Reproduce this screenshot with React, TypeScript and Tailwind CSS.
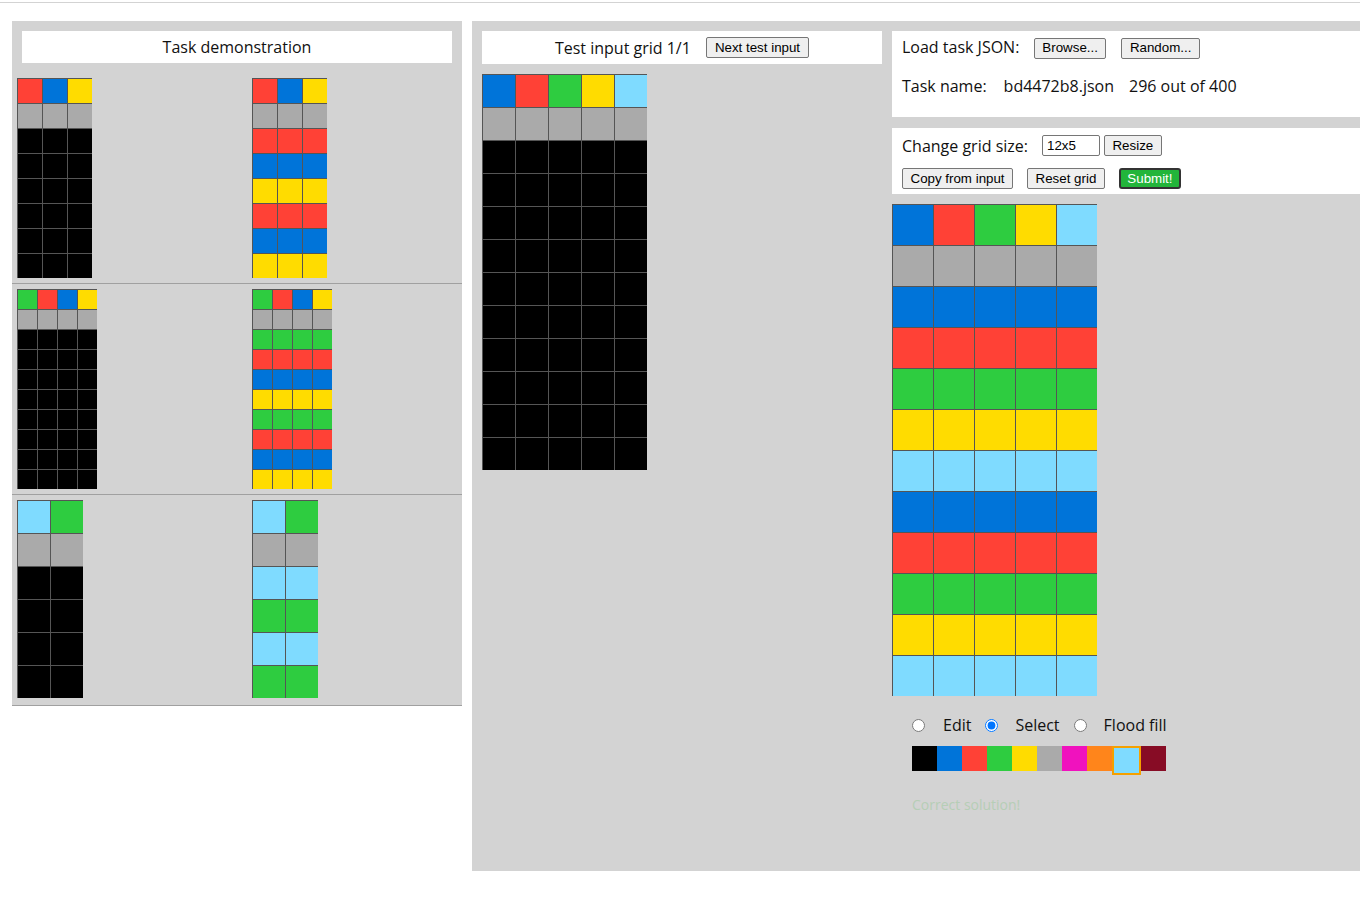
import { useState } from "react";

const COLORS = [
  "#000000",
  "#0074D9",
  "#FF4136",
  "#2ECC40",
  "#FFDC00",
  "#AAAAAA",
  "#F012BE",
  "#FF851B",
  "#7FDBFF",
  "#870C25",
];

// build a grid from a header row, a gray row and a list of fill colours
const makeGrid = (top: number[], body: number[]) => [
  top,
  top.map(() => 5),
  ...body.map((c) => top.map(() => c)),
];

const pairs = [
  {
    input: makeGrid([2, 1, 4], [0, 0, 0, 0, 0, 0]),
    output: makeGrid([2, 1, 4], [2, 1, 4, 2, 1, 4]),
    size: 25,
  },
  {
    input: makeGrid([3, 2, 1, 4], [0, 0, 0, 0, 0, 0, 0, 0]),
    output: makeGrid([3, 2, 1, 4], [3, 2, 1, 4, 3, 2, 1, 4]),
    size: 20,
  },
  {
    input: makeGrid([8, 3], [0, 0, 0, 0]),
    output: makeGrid([8, 3], [8, 3, 8, 3]),
    size: 33,
  },
];

const testInput = makeGrid([1, 2, 3, 4, 8], [0, 0, 0, 0, 0, 0, 0, 0, 0, 0]);
const testOutput = makeGrid([1, 2, 3, 4, 8], [1, 2, 3, 4, 8, 1, 2, 3, 4, 8]);

const Grid = ({ rows, size }: { rows: number[][]; size: number }) => (
  <div className="flex flex-col">
    {rows.map((row, r) => (
      <div className="flex" key={r}>
        {row.map((c, i) => (
          <span
            key={i}
            className="box-border border-t border-l border-[#555555]"
            style={{ width: size, height: size, backgroundColor: COLORS[c] }}
          />
        ))}
      </div>
    ))}
  </div>
);

const Btn = ({
  children,
  className = "px-[7.5px]",
}: {
  children: React.ReactNode;
  className?: string;
}) => (
  <button
    className={`h-[21px] rounded-[2px] border border-[#767676] bg-[#efefef] text-black font-['Liberation_Sans',Arial,sans-serif] text-[13.33px] leading-none ${className}`}
  >
    {children}
  </button>
);

export default function App() {
  const [mode, setMode] = useState("select");
  const [selected, setSelected] = useState(8);

  return (
    <div className="w-[1360px] h-[906px] overflow-hidden bg-white font-['Open_Sans',sans-serif] text-[16px] text-[#111]">
      <div className="mt-[2px] h-px bg-[#d3d3d3]" />

      <div className="mt-[18px] flex items-start">
        {/* Task demonstration */}
        <div className="ml-[12px] w-[450px] shrink-0 bg-[#d3d3d3] pt-[10px]">
          <div className="mx-[10px] mb-[10px] h-[32px] bg-white flex items-center justify-center">
            Task demonstration
          </div>
          {pairs.map((p, i) => (
            <div className="flex p-[5px] border-b border-[#a0a0a0]" key={i}>
              <div className="w-[235px] h-[200px]">
                <Grid rows={p.input} size={p.size} />
              </div>
              <div className="h-[200px]">
                <Grid rows={p.output} size={p.size} />
              </div>
            </div>
          ))}
        </div>

        {/* Workspace */}
        <div className="ml-[10px] flex-1 h-[850px] bg-[#d3d3d3] pt-[10px] pl-[10px] flex gap-[10px]">
          <div className="w-[400px] shrink-0">
            <div className="h-[33px] bg-white flex items-center justify-center gap-[15px]">
              <span>Test input grid 1/1</span>
              <Btn className="px-[8px]">Next test input</Btn>
            </div>
            <div className="mt-[10px]">
              <Grid rows={testInput} size={33} />
            </div>
          </div>

          <div className="flex-1 flex flex-col">
            <div className="h-[86px] bg-white px-[10px]">
              <div className="h-[32px] flex items-center">
                <span>Load task JSON:</span>
                <Btn className="ml-[15px] mt-[2px] px-[7px]">Browse...</Btn>
                <Btn className="ml-[15px] mt-[2px] px-[8px]">Random...</Btn>
              </div>
              <div className="mt-[7px] h-[32px] flex items-center">
                <span>Task name:</span>
                <span className="ml-[17px]">bd4472b8.json</span>
                <span className="ml-[15px]">296 out of 400</span>
              </div>
            </div>

            <div className="mt-[11px] h-[66px] bg-white px-[10px] pt-[7px]">
              <div className="h-[21px] flex items-center">
                <span>Change grid size:</span>
                <input
                  className="ml-[14px] w-[58px] h-[21px] border border-[#767676] rounded-[2px] px-[4px] text-[13.33px] font-['Liberation_Sans',Arial,sans-serif] text-black outline-none"
                  defaultValue="12x5"
                />
                <Btn className="ml-[4px] px-[7.5px]">Resize</Btn>
              </div>
              <div className="mt-[12px] h-[21px] flex items-center">
                <Btn>Copy from input</Btn>
                <Btn className="ml-[14px] px-[7.5px]">Reset grid</Btn>
                <button className="ml-[14px] h-[21px] px-[6.5px] rounded-[3px] border-2 border-[#333333] bg-[#22b53a] text-white font-['Liberation_Sans',Arial,sans-serif] text-[13.33px] leading-none">
                  Submit!
                </button>
              </div>
            </div>

            <div className="mt-[10px]">
              <Grid rows={testOutput} size={41} />
            </div>

            <div className="mt-[18px] h-[22px] pl-[20px] flex items-center">
              {[
                ["edit", "Edit", "ml-[0px]", "ml-[18px]"],
                ["select", "Select", "ml-[14px]", "ml-[17px]"],
                ["flood", "Flood fill", "ml-[14px]", "ml-[17px]"],
              ].map(([id, label, rm, lm]) => (
                <label className="flex items-center" key={id}>
                  <input
                    type="radio"
                    name="tool"
                    className={`m-0 w-[13px] h-[13px] ${rm}`}
                    checked={mode === id}
                    onChange={() => setMode(id)}
                  />
                  <span className={lm}>{label}</span>
                </label>
              ))}
            </div>

            <div className="mt-[10px] pl-[20px] flex items-start">
              {COLORS.map((c, i) => (
                <span
                  key={i}
                  onClick={() => setSelected(i)}
                  className={
                    selected === i
                      ? "box-border w-[29px] h-[29px] border-2 border-[#f5a000]"
                      : "w-[25px] h-[25px]"
                  }
                  style={{ backgroundColor: c }}
                />
              ))}
            </div>

            <div className="mt-[19px] pl-[20px] text-[14px] text-[#b6ceb6]">
              Correct solution!
            </div>
          </div>
        </div>
      </div>
    </div>
  );
}
